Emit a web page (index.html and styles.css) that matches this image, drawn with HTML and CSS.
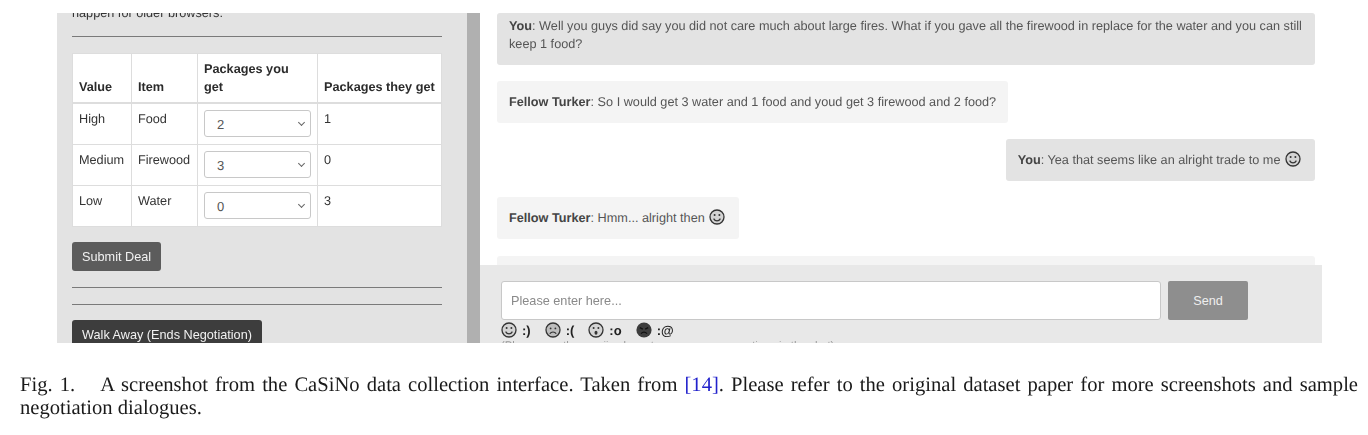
FILE: index.html
```html
<!DOCTYPE html>
<html lang="en">
<head>
  <meta charset="UTF-8" />
  <meta name="viewport" content="width=device-width, initial-scale=1.0"/>
  <title>CaSiNo figure</title>
  <link rel="stylesheet" href="styles.css">
</head>
<body>
  <svg class="defs" width="0" height="0">
    <symbol id="face-smile" viewBox="0 0 16 16">
      <circle cx="8" cy="8" r="7" fill="#d4d4d4" stroke="#333" stroke-width="1.3"/>
      <circle cx="5.6" cy="6" r="1" fill="#333"/>
      <circle cx="10.4" cy="6" r="1" fill="#333"/>
      <path d="M4.6 9.6c.9 1.6 2.1 2.2 3.4 2.2s2.5-.6 3.4-2.2" fill="none" stroke="#333" stroke-width="1.2"/>
    </symbol>
    <symbol id="face-sad" viewBox="0 0 16 16">
      <circle cx="8" cy="8" r="7" fill="#bdbdbd" stroke="#333" stroke-width="1.3"/>
      <circle cx="5.6" cy="6.4" r=".9" fill="#333"/>
      <circle cx="10.4" cy="6.4" r=".9" fill="#333"/>
      <path d="M4.8 11.8c.8-1.3 1.9-1.8 3.2-1.8s2.4.5 3.2 1.8" fill="none" stroke="#333" stroke-width="1.2"/>
    </symbol>
    <symbol id="face-wow" viewBox="0 0 16 16">
      <circle cx="8" cy="8" r="7" fill="#d4d4d4" stroke="#333" stroke-width="1.3"/>
      <circle cx="5.6" cy="6" r="1" fill="#333"/>
      <circle cx="10.4" cy="6" r="1" fill="#333"/>
      <ellipse cx="8" cy="10.8" rx="1.5" ry="2" fill="#333"/>
    </symbol>
    <symbol id="face-angry" viewBox="0 0 16 16">
      <circle cx="8" cy="8" r="7.6" fill="#3d3d3d"/>
      <path d="M3.8 5.6l3 1.5M12.2 5.6l-3 1.5" stroke="#111" stroke-width="1.2"/>
      <path d="M5 11.6c1-1 2-1.4 3-1.4s2 .4 3 1.4" fill="none" stroke="#111" stroke-width="1.3"/>
    </symbol>
  </svg>

  <div class="shot">
    <div class="side">
      <p class="note">happen for older browsers:</p>
      <hr class="rule first">
      <table class="deal">
        <thead>
          <tr>
            <th class="col-value">Value</th>
            <th class="col-item">Item</th>
            <th class="col-you">Packages you<br>get</th>
            <th class="col-they">Packages they get</th>
          </tr>
        </thead>
        <tbody>
          <tr>
            <td>High</td>
            <td>Food</td>
            <td><div class="pick">2</div></td>
            <td>1</td>
          </tr>
          <tr>
            <td>Medium</td>
            <td>Firewood</td>
            <td><div class="pick">3</div></td>
            <td>0</td>
          </tr>
          <tr>
            <td>Low</td>
            <td>Water</td>
            <td><div class="pick">0</div></td>
            <td>3</td>
          </tr>
        </tbody>
      </table>
      <button class="btn btn-submit">Submit Deal</button>
      <hr class="rule">
      <hr class="rule tight">
      <button class="btn btn-walk">Walk Away (Ends Negotiation)</button>
    </div>
    <div class="divider"></div>
    <div class="chat">
      <div class="messages">
        <div class="msg mine wide clipped"><b>You</b>: Well you guys did say you did not care much about large fires. What if you gave all the firewood in replace for the water and you can still keep 1 food?</div>
        <div class="msg theirs"><b>Fellow Turker</b>: So I would get 3 water and 1 food and youd get 3 firewood and 2 food?</div>
        <div class="msg mine right"><b>You</b>: Yea that seems like an alright trade to me <svg class="face"><use href="#face-smile"/></svg></div>
        <div class="msg theirs"><b>Fellow Turker</b>: Hmm... alright then <svg class="face"><use href="#face-smile"/></svg></div>
        <div class="msg theirs wide">&nbsp;</div>
      </div>
      <div class="composer">
        <div class="entry">
          <input class="box" type="text" placeholder="Please enter here...">
          <button class="send">Send</button>
        </div>
        <div class="emojis">
          <span class="emoji"><svg class="face"><use href="#face-smile"/></svg>:)</span>
          <span class="emoji"><svg class="face"><use href="#face-sad"/></svg>:(</span>
          <span class="emoji"><svg class="face"><use href="#face-wow"/></svg>:o</span>
          <span class="emoji"><svg class="face"><use href="#face-angry"/></svg>:@</span>
        </div>
        <div class="hint">(Please use the emojis above to express your emotions in the chat)</div>
      </div>
    </div>
  </div>

  <p class="caption">Fig. 1.<span class="gap"></span>A screenshot from the CaSiNo data collection interface. Taken from <span class="ref">[14]</span>. Please refer to the original dataset paper for more screenshots and sample negotiation dialogues.</p>
</body>
</html>
```

FILE: styles.css
```css
body {
  margin: 0;
  background: white;
  font-family: "Liberation Sans", Arial, sans-serif;
  text-rendering: geometricPrecision;
  overflow: hidden;
}

.defs {
  position: absolute;
}

.shot {
  display: flex;
  width: 1265px;
  height: 330px;
  margin: 13px 0 0 57px;
  overflow: hidden;
  font-size: 12.7px;
  line-height: 18px;
  color: #333;
  filter: blur(0.4px);
}

/* Panneau de gauche */
.side {
  width: 410px;
  flex: none;
  box-sizing: border-box;
  padding: 0 25px 0 15px;
  background: #e3e3e3;
}

.note {
  margin: -9px 0 0;
}

.rule {
  margin: 15px 0 16px;
  border: none;
  border-top: 1px solid #7a7a7a;
}

.rule.first {
  margin: 14px 0 16px;
}

.rule.tight {
  margin-top: 0;
  margin-bottom: 15px;
}

.deal {
  width: 370px;
  table-layout: fixed;
  border-collapse: collapse;
  background: white;
  margin-bottom: 15px;
}

.deal th,
.deal td {
  border: 1px solid #dddddd;
  padding: 6px;
  text-align: left;
  vertical-align: top;
}

.deal th {
  vertical-align: bottom;
  font-weight: bold;
  border-bottom-width: 2px;
  color: #2b2b2b;
}

.col-value { width: 46px; }
.col-item { width: 53px; }
.col-you { width: 107px; }

.pick {
  position: relative;
  height: 25px;
  margin: 0 0 1px;
  padding-left: 12px;
  font-size: 13px;
  line-height: 27px;
  border: 1px solid #c8c8c8;
  border-radius: 3px;
  background: white;
  color: #555;
}

.pick::after {
  content: "";
  position: absolute;
  right: 6px;
  top: 9px;
  width: 4px;
  height: 4px;
  border-right: 1px solid #666;
  border-bottom: 1px solid #666;
  transform: rotate(45deg);
}

.btn {
  display: block;
  height: 29px;
  padding: 0 10px;
  border: none;
  border-radius: 3px;
  font-family: inherit;
  font-size: 12.7px;
  color: #f2f2f2;
}

.btn-submit {
  background: #5c5c5c;
}

.btn-walk {
  background: #3d3d3d;
}

.btn-submit + .rule {
  margin-top: 16px;
}

/* Separateur */
.divider {
  width: 13px;
  flex: none;
  background: #b0b0b0;
}

/* Zone de discussion */
.chat {
  flex: 1;
  display: flex;
  flex-direction: column;
  min-width: 0;
}

.messages {
  height: 252px;
  flex: none;
  box-sizing: border-box;
  display: flex;
  flex-direction: column;
  align-items: flex-start;
  gap: 16.2px;
  padding: 0 7px 0 17px;
  overflow: hidden;
}

.msg {
  box-sizing: border-box;
  padding: 12px;
  border-radius: 3px;
  color: #555;
  flex: none;
}

.msg b {
  color: #444;
}

.msg .face {
  margin: 0 2px 0 1px;
}

.mine {
  background: #e3e3e3;
}

.theirs {
  background: #f4f4f4;
}

.wide {
  width: 100%;
}

.right {
  align-self: flex-end;
}

.clipped {
  padding: 4px 12px 11.8px;
}

.face {
  width: 16px;
  height: 16px;
  vertical-align: -3px;
}

.composer {
  flex: 1;
  padding: 16px 0 0 21px;
  background: #e8e8e8;
}

.entry {
  display: flex;
  gap: 7px;
}

.box {
  width: 660px;
  height: 39px;
  box-sizing: border-box;
  padding: 0 9px;
  border: 1px solid #c8c8c8;
  border-radius: 3px;
  background: white;
  font-family: inherit;
  font-size: 12.7px;
}

.box::placeholder {
  color: #8a8a8a;
  opacity: 1;
}

.send {
  width: 80px;
  height: 39px;
  border: none;
  border-radius: 2px;
  background: #8e8e8e;
  color: #eee;
  font-family: inherit;
  font-size: 12.7px;
}

.emojis {
  display: flex;
  gap: 14px;
  margin-top: 2px;
  height: 17px;
  font-size: 13px;
  font-weight: bold;
  color: #222;
}

.emoji .face {
  margin-right: 5px;
}

.hint {
  font-size: 11.2px;
  line-height: 14px;
  color: #999;
}

/* Legende */
.caption {
  margin: 31px 10px 0 20px;
  font-family: "Liberation Serif", "Times New Roman", serif;
  font-size: 20.6px;
  line-height: 23px;
  color: #1a1a1a;
  text-align: justify;
  filter: blur(0.3px);
}

.gap {
  display: inline-block;
  width: 25px;
}

.ref {
  color: #2222cc;
}
```
